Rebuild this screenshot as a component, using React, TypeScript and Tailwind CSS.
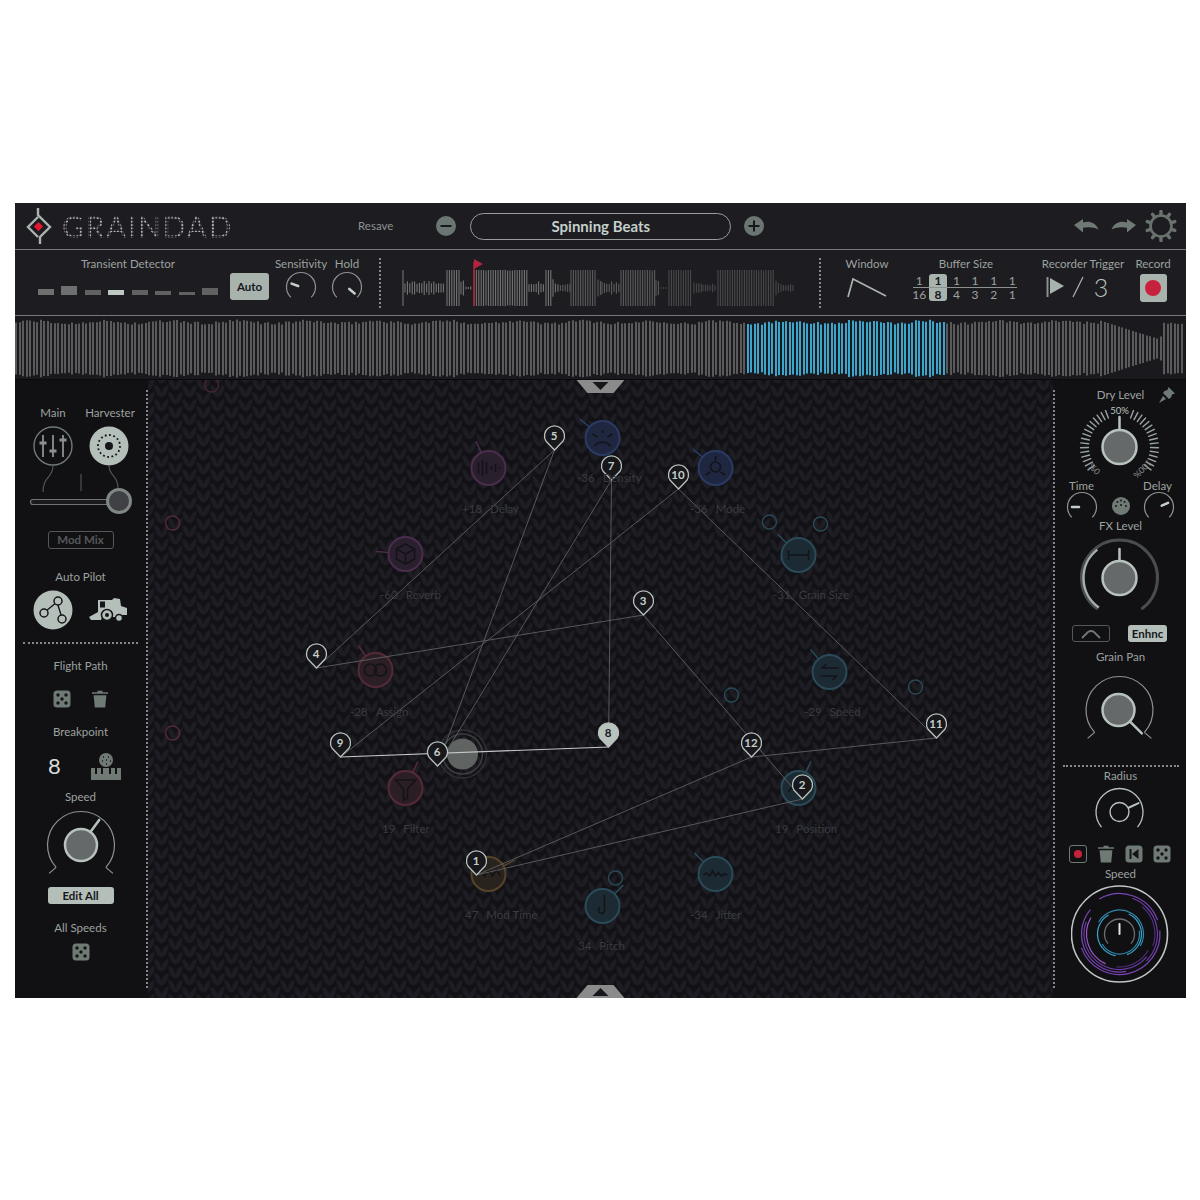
import React from "react";

const pt = (cx: number, cy: number, r: number, a: number) => {
  const t = ((a - 90) * Math.PI) / 180;
  return [cx + r * Math.cos(t), cy + r * Math.sin(t)];
};
const arc = (cx: number, cy: number, r: number, a0: number, a1: number) => {
  const [x0, y0] = pt(cx, cy, r, a0);
  const [x1, y1] = pt(cx, cy, r, a1);
  return `M${x0} ${y0}A${r} ${r} 0 ${a1 - a0 > 180 ? 1 : 0} 1 ${x1} ${y1}`;
};
const rnd = (i: number) => {
  const s = Math.sin(i * 12.9898 + 4.1) * 43758.5453;
  return s - Math.floor(s);
};

function Ray({ cx, cy, r0, r1, a, w = 2.5, c = "#b8c2bd" }: { cx: number; cy: number; r0: number; r1: number; a: number; w?: number; c?: string }) {
  const [x0, y0] = pt(cx, cy, r0, a);
  const [x1, y1] = pt(cx, cy, r1, a);
  return <line x1={x0} y1={y0} x2={x1} y2={y1} stroke={c} strokeWidth={w} strokeLinecap="round" />;
}

function Knob({ cx, cy, r, a, h }: { cx: number; cy: number; r: number; a: number; h: number }) {
  return (
    <g>
      <Ray cx={cx} cy={cy} r0={r} r1={h} a={a} />
      <circle cx={cx} cy={cy} r={r} fill="#666969" stroke="#b8c2bd" strokeWidth="2.5" />
    </g>
  );
}

function Flared({ cx, cy, r, a = 132 }: { cx: number; cy: number; r: number; a?: number }) {
  const [lx, ly] = pt(cx, cy, r, -a);
  const [rx, ry] = pt(cx, cy, r, a);
  return (
    <path
      d={`${arc(cx, cy, r, -a, a)}M${lx} ${ly}l-7 6M${rx} ${ry}l7 6`}
      fill="none"
      stroke="#8d9290"
      strokeWidth="1.2"
    />
  );
}

function MiniKnob({ a }: { a: number }) {
  return (
    <svg viewBox="0 0 32 30" className="w-8 h-[30px] shrink-0">
      <path d={arc(16, 16, 14.5, -135, 135)} fill="none" stroke="#8d9290" strokeWidth="1.2" />
      <Ray cx={16} cy={16} r0={3} r1={10} a={a} w={2.5} c="#c5cfc9" />
    </svg>
  );
}

function Dice({ c = "#6f7a75" }: { c?: string }) {
  return (
    <svg viewBox="0 0 18 18" className="w-[18px] h-[18px]">
      <rect x="0.5" y="0.5" width="17" height="17" rx="3.5" fill={c} />
      {[[5, 5], [13, 5], [9, 9], [5, 13], [13, 13]].map(([x, y], i) => (
        <circle key={i} cx={x} cy={y} r="1.7" fill="#141417" />
      ))}
    </svg>
  );
}

function Trash() {
  return (
    <svg viewBox="0 0 18 18" className="w-[18px] h-[18px]">
      <path d="M6.5 2.2V.8h5v1.4H17v1.6H1V2.2zM2.6 5.2h12.8l-1.2 12.3H3.8z" fill="#6f7a75" />
    </svg>
  );
}

function Label({ children, className = "" }: { children: React.ReactNode; className?: string }) {
  return <div className={`text-[11.5px] leading-4 text-[#9ca29f] whitespace-nowrap ${className}`}>{children}</div>;
}

function Logo() {
  return (
    <svg viewBox="25 206 28 40" className="w-7 h-10">
      <path d="M38 208v7l12 12-10 10v7M38 217l-10 10 10 10" fill="none" stroke="#aab4af" strokeWidth="2.4" />
      <path d="M38.5 222l4.6 4.6-4.6 4.6-4.6-4.6z" fill="#e3182f" />
    </svg>
  );
}

function Gear() {
  return (
    <svg viewBox="0 0 32 32" className="w-8 h-8">
      <circle cx="16" cy="16" r="10.5" fill="none" stroke="#6a726e" strokeWidth="2.6" />
      {Array.from({ length: 10 }, (_, i) => (
        <Ray key={i} cx={16} cy={16} r0={11} r1={14.5} a={i * 36} w={3.4} c="#6a726e" />
      ))}
    </svg>
  );
}

function Arrow({ flip }: { flip?: boolean }) {
  return (
    <svg viewBox="0 0 26 16" className={`w-[26px] h-4 ${flip ? "-scale-x-100" : ""}`}>
      <path d="M1 7L10 1v3.5C16 2.8 22 4 25.5 11.5 21 9.2 15.5 8.6 10 9.8V14.5z" fill="#6f7a75" />
    </svg>
  );
}

function RoundBtn({ plus }: { plus?: boolean }) {
  return (
    <svg viewBox="0 0 20 20" className="w-5 h-5">
      <circle cx="10" cy="10" r="10" fill="#6b7571" />
      <path d={plus ? "M4.5 10h11M10 4.5v11" : "M4.5 10h11"} stroke="#17171b" strokeWidth="2" />
    </svg>
  );
}

const miniSegs: [number, number, number][] = [
  [403, 404, 36], [405, 445, 12], [447, 461, 36], [461, 465, 14], [466, 472, 3], [474, 528, 36], [529, 545, 11],
  [546, 552, 36], [553, 556, 15], [558, 570, 9], [571, 597, 36], [598, 601, 16], [602, 620, 13], [621, 655, 36],
  [656, 660, 14], [661, 668, 2], [669, 692, 36], [694, 702, 13], [703, 716, 8], [718, 775, 36], [776, 780, 12],
  [781, 795, 7],
];

function MiniWave() {
  const bars: React.ReactNode[] = [];
  miniSegs.forEach(([a, b, h], s) => {
    for (let x = a; x <= b; x += 2.4) {
      const v = h === 36 ? 36 - (rnd(x) > 0.85 ? 1 : 0) : h * (0.6 + rnd(x) * 0.6);
      bars.push(
        <line
          key={`${s}-${x}`}
          x1={x}
          x2={x}
          y1={288 - v / 2}
          y2={288 + v / 2}
          stroke={x < 560 ? "#757575" : x < 660 ? "#5c5c5c" : "#4a4a4c"}
          strokeWidth="1.1"
        />,
      );
    }
  });
  return (
    <svg viewBox="400 258 400 50" className="w-[400px] h-[50px]">
      {bars}
      <line x1="474" x2="474" y1="262" y2="306" stroke="#a32238" strokeWidth="1.6" />
      <path d="M474 259l9 5-9 5z" fill="#b3243f" />
    </svg>
  );
}

function BigWave() {
  const bars: React.ReactNode[] = [];
  for (let i = 0; i < 334; i++) {
    const x = Math.round(16 + i * 3.5);
    let h = 47 + ((Math.sin(i * 0.32) + 1) / 2) * 5 + rnd(i) * 6;
    if (x > 1100 && x < 1160) h = 56 - ((x - 1100) / 60) * 38;
    if (x >= 1160 && x < 1163) h = 24;
    const blue = x >= 748 && x <= 946;
    bars.push(
      <line key={i} x1={x} x2={x} y1={348.5 - h / 2} y2={348.5 + h / 2} stroke={blue ? "#3ba5cb" : "#5a5a5a"} strokeWidth="2" />,
    );
  }
  return (
    <svg viewBox="15 316 1171 63" className="w-full h-full block">
      {bars}
    </svg>
  );
}

const PUR = ["#4a2d4d", "#2a1f2d"];
const BLU = ["#2a3a63", "#1f2740"];
const TEA = ["#2a4a58", "#1c2b33"];
const RED = ["#552a38", "#2b1e25"];
const ORA = ["#57432a", "#29231e"];

const mods: { x: number; y: number; c: string[]; a: number; v: string; n: string; lx: number; ly: number; icon: string }[] = [
  { x: 488, y: 468, c: PUR, a: -25, v: "+18", n: "Delay", lx: 462, ly: 509, icon: "M478 462v12M482 460v16M486 462v12M491 466v4M495 464v8M499 467v2" },
  { x: 602, y: 438, c: BLU, a: -50, v: "-36", n: "Density", lx: 577, ly: 478, icon: "M592 434l5 3M612 434l-5 3M594 446c4-5 12-5 16 0M602 430v3" },
  { x: 715, y: 468, c: BLU, a: -50, v: "-36", n: "Mode", lx: 690, ly: 509, icon: "M715 456v5M705 475l5-3M725 475l-5-3M720 467a5 5 0 1 1-10 0a5 5 0 1 1 10 0" },
  { x: 405, y: 554, c: PUR, a: -85, v: "-60", n: "Reverb", lx: 380, ly: 595, icon: "M405 544l9 5v10l-9 5-9-5v-10zM405 554v10M405 554l9-5M405 554l-9-5" },
  { x: 798, y: 555, c: TEA, a: -45, v: "-31", n: "Grain Size", lx: 773, ly: 595, icon: "M788 550v10M808 550v10M788 555h20" },
  { x: 375, y: 670, c: RED, a: -35, v: "-28", n: "Assign", lx: 350, ly: 712, icon: "M376 670a6 6 0 1 1-12 0a6 6 0 1 1 12 0M386 670a6 6 0 1 1-12 0a6 6 0 1 1 12 0" },
  { x: 829, y: 672, c: TEA, a: -40, v: "-29", n: "Speed", lx: 804, ly: 712, icon: "M838 668h-16l4-4M820 676h16l-4 4" },
  { x: 405, y: 788, c: RED, a: 25, v: "19", n: "Filter", lx: 382, ly: 829, icon: "M395 780h20l-8 9v9l-4 2v-11z" },
  { x: 798, y: 788, c: TEA, a: 25, v: "19", n: "Position", lx: 775, ly: 829, icon: "M788 792l4-6 4 6 4-6 4 6 4-6" },
  { x: 488, y: 874, c: ORA, a: 62, v: "47", n: "Mod Time", lx: 465, ly: 915, icon: "M476 876l4-6 4 6 4-6 4 6 4-6 4 6" },
  { x: 602, y: 906, c: TEA, a: 45, v: "34", n: "Pitch", lx: 578, ly: 946, icon: "M604 895v15a3 3 0 1 1-4-2.5" },
  { x: 715, y: 874, c: TEA, a: -45, v: "-34", n: "Jitter", lx: 690, ly: 915, icon: "M703 875l3-2 3 3 3-5 3 5 3-3 3 3 3-2 3 1" },
];

const rings: [number, number, string][] = [
  [211, 385, "#4a2530"], [172, 523, "#552a38"], [172, 733, "#552a38"], [769, 522, "#2a4a58"], [820, 524, "#2a4a58"],
  [731, 695, "#2a4a58"], [915, 687, "#2a4a58"], [615, 878, "#2a4a58"],
];

const pins: [number, number, string][] = [
  [476, 875, "1"], [802, 799, "2"], [643, 615, "3"], [316, 668, "4"], [554, 450, "5"], [437, 766, "6"],
  [611, 480, "7"], [608, 747, "8"], [340, 757, "9"], [678, 489, "10"], [936, 738, "11"], [751, 757, "12"],
];

const LEAF = "c4 1 7 5 7.2 12.5c-4.2 -1 -6.9 -6 -7.2 -12.5z";
const LEAF_R = "c-4 1 -7 5 -7.2 12.5c4.2 -1 6.9 -6 7.2 -12.5z";

function Canvas() {
  return (
    <div className="relative flex-1 h-full overflow-hidden bg-[#17171c]">
      <svg viewBox="148 380 904 618" className="absolute inset-0 w-full h-full">
        <defs>
          <pattern id="knit" x="0" y="0" width="28" height="14" patternUnits="userSpaceOnUse">
            <rect width="28" height="14" fill="#121216" />
            {[-14, 0, 14].flatMap((y) => [
              <path key={`a${y}`} d={`M0 ${y}${LEAF}`} fill="#1d1d23" />,
              <path key={`b${y}`} d={`M14 ${y}${LEAF_R}`} fill="#1d1d23" />,
              <path key={`c${y}`} d={`M14 ${y + 7}${LEAF}`} fill="#1d1d23" />,
              <path key={`d${y}`} d={`M28 ${y + 7}${LEAF_R}`} fill="#1d1d23" />,
            ])}
          </pattern>
        </defs>
        <rect x="148" y="380" width="904" height="618" fill="url(#knit)" />
        {rings.map(([x, y, c], i) => (
          <circle key={i} cx={x} cy={y} r="7" fill="none" stroke={c} strokeWidth="1.4" />
        ))}
        {mods.map((m, i) => (
          <g key={i} fill="none">
            <Ray cx={m.x} cy={m.y} r0={18} r1={29} a={m.a} w={1.6} c={m.c[0]} />
            <circle cx={m.x} cy={m.y} r="17" fill={m.c[1]} stroke={m.c[0]} strokeWidth="2" />
            <path d={m.icon} stroke="#131318" strokeWidth="1.6" />
          </g>
        ))}
        <circle cx="462" cy="754" r="24" fill="none" stroke="#2e3034" strokeWidth="1.5" />
        <circle cx="462" cy="754" r="20" fill="none" stroke="#3c3e41" strokeWidth="1.5" />
        <circle cx="462" cy="754" r="15.5" fill="#5f6362" />
        {pins.map(([x, y], i) => {
          const [nx, ny] = pins[(i + 1) % pins.length];
          const bright = i === 7;
          return (
            <line key={i} x1={x} y1={y} x2={nx} y2={ny} stroke={bright ? "#c3c8c6" : "#5e6061"} strokeWidth={bright ? 1.2 : 0.9} />
          );
        })}
        {pins.map(([x, y, t]) => (
          <path
            key={t}
            d={`M${x} ${y}L${x - 8.6} ${y - 9}A10 10 0 1 1 ${x + 8.6} ${y - 9}Z`}
            fill={t === "8" ? "#b8c2bd" : "#17171c"}
            stroke="#b8c2bd"
            strokeWidth="1.3"
            strokeLinejoin="round"
          />
        ))}
        <path d="M576 380h48l-11 13h-26z" fill="#8b8b8b" />
        <path d="M592 382h16l-8 8z" fill="#17171b" />
        <path d="M576 998h48l-11-13h-26z" fill="#8b8b8b" />
        <path d="M592 996h16l-8-8z" fill="#17171b" />
      </svg>
      {mods.map((m) => (
        <div
          key={m.n}
          className="absolute flex gap-[8px] text-[11.5px] leading-4 text-[#3a3b40] whitespace-nowrap"
          style={{ left: m.lx - 148, top: m.ly - 380 - 8 }}
        >
          <span>{m.v}</span>
          <span>{m.n}</span>
        </div>
      ))}
      {pins.map(([x, y, t]) => (
        <div
          key={t}
          className={`absolute w-6 h-4 text-center text-[11.5px] font-bold leading-4 ${t === "8" ? "text-[#17171b]" : "text-[#c5cfc9]"}`}
          style={{ left: x - 148 - 12, top: y - 380 - 22 }}
        >
          {t}
        </div>
      ))}
    </div>
  );
}

function LeftPanel() {
  return (
    <div className="w-[131px] h-full flex flex-col items-center pt-[25px]">
      <div className="w-full flex">
        <Label className="w-[76px] text-center">Main</Label>
        <Label className="w-[38px] flex justify-center">Harvester</Label>
      </div>
      <svg viewBox="15 421 131 94" className="w-[131px] h-[94px] shrink-0">
        <circle cx="53" cy="446" r="19" fill="none" stroke="#6f7a75" strokeWidth="1.4" />
        <path d="M43 435v22M53 435v22M63 435v22" stroke="#8a918e" strokeWidth="1.8" />
        <path d="M39.5 443h7M49.5 451h7M59.5 440h7" stroke="#8a918e" strokeWidth="3.2" />
        <circle cx="109" cy="446" r="19.5" fill="#b5bfb9" />
        <circle cx="109" cy="446" r="11" fill="none" stroke="#16161a" strokeWidth="1.8" strokeDasharray="1.8 2.5" />
        <circle cx="109" cy="446" r="4" fill="#16161a" />
        <path d="M53 466c0 12-10 10-10 26M109 466c0 10 9 9 9 22M81 474v17" fill="none" stroke="#55585a" strokeWidth="1.1" />
        <rect x="30.5" y="499.5" width="78" height="5" rx="2.5" fill="#1a1a1e" stroke="#6f7574" strokeWidth="1.2" />
        <circle cx="119" cy="501" r="11.5" fill="#3f4144" stroke="#7f8684" strokeWidth="3" />
      </svg>
      <div className="w-[66px] h-[18px] mt-[16px] border border-[#55585a] rounded-[3px] text-center text-[11.5px] leading-4 font-bold text-[#55585a]">
        Mod Mix
      </div>
      <Label className="mt-[20px]">Auto Pilot</Label>
      <div className="w-full flex items-center h-[41px] mt-[4px] pl-[18px] gap-[15px]">
        <svg viewBox="0 0 40 40" className="w-10 h-10">
          <circle cx="20" cy="20" r="19.5" fill="#b5bfb9" />
          <path d="M13 21L24 12M24 12l5 16" stroke="#16161a" strokeWidth="1.4" fill="none" />
          <circle cx="11" cy="23" r="4" fill="#b5bfb9" stroke="#16161a" strokeWidth="1.5" />
          <circle cx="25" cy="11" r="4" fill="#b5bfb9" stroke="#16161a" strokeWidth="1.5" />
          <circle cx="29" cy="29" r="4" fill="#b5bfb9" stroke="#16161a" strokeWidth="1.5" />
        </svg>
        <svg viewBox="0 0 40 26" className="w-10 h-[26px]">
          <path d="M10 3h14l2-2 6 1 1 7 6 2v7h-5l-3 2H14l-4-3zM1 20l9-5 5 3-2 5H3z" fill="#b5bfb9" />
          <rect x="12" y="4.5" width="5" height="6" fill="#16161a" />
          <circle cx="19" cy="18" r="5.5" fill="#b5bfb9" stroke="#16161a" strokeWidth="1.5" />
          <circle cx="19" cy="18" r="2" fill="#16161a" />
          <circle cx="31" cy="21" r="3.5" fill="#b5bfb9" stroke="#16161a" strokeWidth="1.5" />
        </svg>
      </div>
      <div className="w-[115px] mt-[12px] border-t-2 border-dotted border-[#85898a]" />
      <Label className="mt-[14px]">Flight Path</Label>
      <div className="flex gap-[20px] mt-[16px] h-[18px]">
        <Dice />
        <Trash />
      </div>
      <Label className="mt-[16px]">Breakpoint</Label>
      <div className="flex items-center gap-[30px] h-[28px] mt-[12px] pl-[8px]">
        <div className="text-[22px] leading-7 text-[#d5dcd8]">8</div>
        <svg viewBox="0 0 30 28" className="w-[30px] h-7">
          <circle cx="15" cy="8" r="7" fill="#6f7a75" />
          <path d="M12 5h1M17 5h1M11 9h1M15 8h1M19 9h1M15 12h1" stroke="#16161a" strokeWidth="1.3" />
          <path d="M0 16h4v6h2v-6h4v6h2v-6h6v6h2v-6h4v6h2v-6h4v12H0z" fill="#6f7a75" />
        </svg>
      </div>
      <Label className="mt-[9px]">Speed</Label>
      <svg viewBox="40 805 82 74" className="w-[82px] h-[74px] shrink-0">
        <Flared cx={81} cy={845} r={33.5} />
        <Knob cx={81} cy={845} r={16} a={36} h={31} />
      </svg>
      <div className="w-[66px] h-[17px] mt-[8px] bg-[#b5bfb9] rounded-[3px] text-center text-[11.5px] leading-[17px] font-bold text-[#17171b]">
        Edit All
      </div>
      <Label className="mt-[16px]">All Speeds</Label>
      <div className="mt-[7px]">
        <Dice />
      </div>
    </div>
  );
}

function RightPanel() {
  const ticks = Array.from({ length: 41 }, (_, i) => -140 + i * 7).filter((a) => Math.abs(a) > 18 && Math.abs(a) <= 126);
  const dial: [number, number, number, string][] = [
    [40.5, -30, 70, "#7a45b5"], [40.5, 85, 250, "#7a45b5"], [38, 20, 135, "#6a3ba0"], [38, 170, 310, "#7a45b5"],
    [35.5, 40, 110, "#4d2d7a"], [35.5, 130, 290, "#6a3ba0"], [33, 205, 300, "#9a58c8"], [33, 120, 185, "#4d2d7a"],
    [24, -60, 120, "#2e87aa"], [22, 25, 160, "#3ba5cb"], [22, 190, 330, "#3ba5cb"], [20, 80, 240, "#2e87aa"],
  ];
  return (
    <div className="w-[131px] h-full flex flex-col items-center pt-[6px]">
      <div className="w-full grid grid-cols-[1fr_auto_1fr] items-center h-4">
        <div />
        <Label>Dry Level</Label>
        <svg viewBox="0 0 18 18" className="w-[18px] h-[18px] ml-[14px]">
          <path d="M10.5 1l6.5 6.5-3 1-1 3-2 1.5-6-6L6.5 5l3-1zM5 10l3 3-7 4z" fill="#6f7a75" />
        </svg>
      </div>
      <svg viewBox="1055.5 403 130 75" className="w-[130px] h-[75px] mt-[1px] shrink-0 overflow-visible">
        {ticks.map((a) => (
          <Ray key={a} cx={1119} cy={447} r0={31} r1={39} a={a} w={1.4} c="#9ba3a0" />
        ))}
        <text x="1119" y="414" textAnchor="middle" fontSize="9.5" fill="#b8c2bd" fontFamily="Lato">50%</text>
        <text x="1094" y="472" textAnchor="middle" fontSize="8.5" fill="#8e9592" fontFamily="Lato" transform="rotate(-135 1094 469)">0%</text>
        <text x="1142" y="472" textAnchor="middle" fontSize="8.5" fill="#8e9592" fontFamily="Lato" transform="rotate(135 1142 469)">100%</text>
        <Knob cx={1119} cy={447} r={17} a={0} h={30} />
      </svg>
      <div className="w-full flex justify-between px-[14px]">
        <Label>Time</Label>
        <Label>Delay</Label>
      </div>
      <div className="w-full flex justify-between items-center h-[25px] px-[11px] -mt-[1px]">
        <MiniKnob a={-90} />
        <svg viewBox="0 0 18 18" className="w-[18px] h-[18px]">
          <circle cx="9" cy="9" r="9" fill="#6f7a75" />
          {[[4, 9], [5.5, 5], [9, 3.5], [12.5, 5], [14, 9], [9, 8]].map(([x, y], i) => (
            <circle key={i} cx={x} cy={y} r="1" fill="#16161a" />
          ))}
        </svg>
        <MiniKnob a={65} />
      </div>
      <Label>FX Level</Label>
      <svg viewBox="1074.5 534 92 84" className="w-[92px] h-[84px] mt-[1px] shrink-0">
        <path d={arc(1119, 577, 38, -145, 145)} fill="none" stroke="#4a4d4e" strokeWidth="3" />
        <path d={arc(1119, 577, 36, -145, -38)} fill="none" stroke="#a4aeaa" strokeWidth="2.5" />
        <Knob cx={1119} cy={577} r={17} a={0} h={29} />
      </svg>
      <div className="w-full flex justify-center gap-[18px] mt-[6px] pr-[2px]">
        <div className="w-[38px] h-[17px] border border-[#55585a] rounded-[3px] flex items-center justify-center">
          <svg viewBox="0 0 24 10" className="w-6 h-[10px]">
            <path d="M3 9l6-6q3-2 6 0l6 6" fill="none" stroke="#6f7a75" strokeWidth="1.8" />
          </svg>
        </div>
        <div className="w-[39px] h-[17px] bg-[#b5bfb9] rounded-[3px] text-center text-[11.5px] leading-[17px] font-bold text-[#17171b]">
          Enhnc
        </div>
      </div>
      <Label className="mt-[7px]">Grain Pan</Label>
      <svg viewBox="1076.5 665 88 74" className="w-[88px] h-[74px] mt-[1px] shrink-0">
        <Flared cx={1119} cy={709} r={33.5} />
        <Knob cx={1118} cy={709} r={16} a={135} h={33} />
      </svg>
      <div className="w-[116px] mt-[25px] border-t-2 border-dotted border-[#85898a]" />
      <Label className="mt-[1px]">Radius</Label>
      <svg viewBox="1090.5 784 60 47" className="w-[60px] h-[47px] mt-[1px] shrink-0">
        <path d={arc(1119, 811, 23.5, -130, 130)} fill="none" stroke="#b8c2bd" strokeWidth="1.3" />
        <Ray cx={1119} cy={811} r0={10} r1={21} a={65} w={2} />
        <circle cx="1119" cy="811" r="9.5" fill="#111114" stroke="#b8c2bd" strokeWidth="1.4" />
      </svg>
      <div className="flex gap-[10px] items-center h-[20px] mt-[12px] pr-[2px]">
        <div className="w-[18px] h-[18px] border border-[#6f7a75] rounded-[3px] flex items-center justify-center">
          <div className="w-[8px] h-[8px] rounded-full bg-[#c8213c]" />
        </div>
        <Trash />
        <svg viewBox="0 0 18 18" className="w-[18px] h-[18px]">
          <rect x="0.5" y="0.5" width="17" height="17" rx="3.5" fill="#6f7a75" />
          <path d="M4.5 4v10h2V4zM13.5 4L7 9l6.5 5z" fill="#141417" />
        </svg>
        <Dice />
      </div>
      <Label className="mt-[2px]">Speed</Label>
      <svg viewBox="1070.5 882 100 100" className="w-[100px] h-[100px] mt-[1px] shrink-0">
        <circle cx="1119" cy="933" r="48" fill="#101013" stroke="#c0c6c4" strokeWidth="1.6" />
        {dial.map(([r, a0, a1, c], i) => (
          <path key={i} d={arc(1119, 933, r, a0, a1)} fill="none" stroke={c} strokeWidth="1.2" />
        ))}
        <path d={arc(1119, 933, 15, -130, 130)} fill="none" stroke="#6b6e6f" strokeWidth="1.3" />
        <Ray cx={1119} cy={933} r0={0} r1={10} a={0} w={2} c="#dfe5e2" />
      </svg>
    </div>
  );
}

function Header() {
  return (
    <div className="h-[46px] flex items-center border-b border-[#77787a] box-content shrink-0">
      <div className="ml-[10px] shrink-0">
        <Logo />
      </div>
      <div className="ml-[9px] w-[175px] shrink-0 text-[30px] leading-[46px] tracking-[0.055em] whitespace-nowrap bg-clip-text text-transparent bg-[radial-gradient(circle,#b4b7b6_1.1px,transparent_1.4px)] bg-[length:3.4px_3.4px]">
        GRAINDAD
      </div>
      <div className="ml-[121px] text-[11.5px] text-[#8f9391]">Resave</div>
      <div className="ml-[43px]">
        <RoundBtn />
      </div>
      <div className="ml-[14px] w-[261px] h-[27px] rounded-full border border-[#9a9c9b] text-center text-[15px] leading-[24px] font-bold text-[#c5cfc9]">
        Spinning Beats
      </div>
      <div className="ml-[13px]">
        <RoundBtn plus />
      </div>
      <div className="ml-[309px] flex items-center gap-[12px]">
        <Arrow />
        <Arrow flip />
      </div>
      <div className="ml-[8px]">
        <Gear />
      </div>
    </div>
  );
}

function Dots() {
  return <div className="w-0 h-[50px] mt-[8px] border-l-2 border-dotted border-[#85898a] shrink-0" />;
}

function Controls() {
  const levels: [number, string][] = [
    [6, "#6d706e"], [9, "#6d706e"], [5, "#5f6260"], [5, "#bfc9c3"], [5, "#5f6260"], [4, "#5f6260"], [3, "#5f6260"], [7, "#5f6260"],
  ];
  const fr: [string, string][] = [["1", "16"], ["1", "8"], ["1", "4"], ["1", "3"], ["1", "2"], ["1", "1"]];
  return (
    <div className="h-[65px] flex items-start border-b border-[#77787a] box-content shrink-0">
      <div className="ml-[23px] w-[180px] pt-[6px] shrink-0">
        <Label className="text-center">Transient Detector</Label>
        <div className="flex items-end justify-between h-[12px] mt-[11px]">
          {levels.map(([h, c], i) => (
            <div key={i} className="w-[16px]" style={{ height: h, background: c }} />
          ))}
        </div>
      </div>
      <div className="ml-[12px] mt-[23px] w-[39px] h-[27px] bg-[#a9b3ae] rounded-[3px] text-center text-[11.5px] leading-[27px] font-bold text-[#17171b] shrink-0">
        Auto
      </div>
      <div className="ml-[15px] w-[34px] pt-[6px] flex flex-col items-center shrink-0">
        <Label>Sensitivity</Label>
        <div className="-mt-[1px]">
          <MiniKnob a={-70} />
        </div>
      </div>
      <div className="ml-[12px] w-[34px] pt-[6px] flex flex-col items-center shrink-0">
        <Label>Hold</Label>
        <div className="-mt-[1px]">
          <MiniKnob a={130} />
        </div>
      </div>
      <div className="ml-[15px]" />
      <Dots />
      <div className="ml-[19px] mt-[8px] shrink-0">
        <MiniWave />
      </div>
      <div className="ml-[19px]" />
      <Dots />
      <div className="ml-[25px] w-[42px] pt-[6px] flex flex-col items-center shrink-0">
        <Label>Window</Label>
        <svg viewBox="0 0 40 22" className="w-10 h-[22px] mt-[5px]">
          <path d="M1 20L6 2l33 17" fill="none" stroke="#a9b3ae" strokeWidth="1.7" />
        </svg>
      </div>
      <div className="ml-[24px] w-[108px] pt-[6px] flex flex-col items-center shrink-0">
        <Label>Buffer Size</Label>
        <div className="relative flex shrink-0 w-[112px] -mx-[2px] h-[27px] mt-[2px] text-[12px] leading-[13px] text-center text-[#9ca29f]">
          {fr.map(([n, d], i) => (
            <div key={d} className={`w-[18.6px] h-[27px] ${i === 1 ? "bg-[#a9b3ae] rounded-[3px] text-[#17171b] font-bold" : ""}`}>
              <div>{n}</div>
              <div className="mt-[1px]">{d}</div>
            </div>
          ))}
          <div className="absolute left-[3px] right-[5px] top-[13px] h-px bg-[#8b918e]" />
        </div>
      </div>
      <div className="ml-[18px] w-[90px] pt-[6px] flex flex-col items-center shrink-0">
        <Label>Recorder Trigger</Label>
        <div className="flex items-center h-[26px] mt-[2px] pr-[12px] text-[#b8c2bd]">
          <svg viewBox="0 0 20 22" className="w-5 h-[22px]">
            <path d="M1.5 1v20" stroke="#8b918e" strokeWidth="2" />
            <path d="M4 2l14 8-14 8z" fill="#a9b3ae" />
          </svg>
          <svg viewBox="0 0 12 22" className="w-3 h-[22px] ml-[6px]">
            <path d="M1 21L11 1" stroke="#a9b3ae" strokeWidth="1.3" />
          </svg>
          <span className="ml-[10px] text-[25px] leading-[26px] font-light">3</span>
        </div>
      </div>
      <div className="ml-[5px] w-[40px] pt-[6px] flex flex-col items-center shrink-0">
        <Label>Record</Label>
        <div className="w-[27px] h-[28px] mt-[2px] bg-[#a9b3ae] rounded-[3px] flex items-center justify-center">
          <div className="w-[16px] h-[16px] rounded-full bg-[#c8213c]" />
        </div>
      </div>
    </div>
  );
}

export default function App() {
  return (
    <div className="w-[1200px] h-[1200px] bg-white pt-[203px] pl-[15px] font-[Lato]">
      <div className="w-[1171px] h-[795px] bg-[#1c1c21] flex flex-col overflow-hidden">
        <Header />
        <Controls />
        <div className="h-[63px] bg-[#1a1a1e] border-b border-[#0a0a0c] box-content shrink-0">
          <BigWave />
        </div>
        <div className="flex-1 min-h-0 flex bg-[#111114]">
          <LeftPanel />
          <div className="w-0 my-[10px] border-l-2 border-dotted border-[#85898a]" />
          <Canvas />
          <div className="w-0 my-[10px] border-l-2 border-dotted border-[#85898a]" />
          <RightPanel />
        </div>
      </div>
    </div>
  );
}
